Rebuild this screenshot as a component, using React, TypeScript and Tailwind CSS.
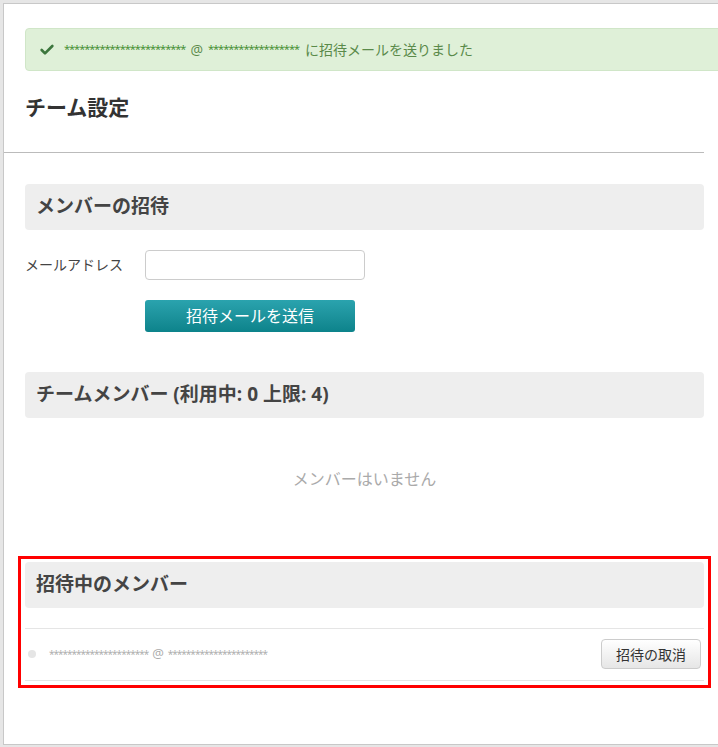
import { Check } from "lucide-react";

const font = { fontFamily: '"Open Sans", "Noto Sans CJK JP", sans-serif' };

function SectionHeader({ children }: { children: React.ReactNode }) {
  return (
    <div className="h-[46px] rounded-[4px] bg-[#eeeeee] px-[11px] flex items-center text-[19px] font-bold text-[#444]">
      {children}
    </div>
  );
}

export default function App() {
  return (
    <div className="w-[718px] h-[747px] bg-[#e6e6e6] overflow-hidden" style={font}>
      <div className="ml-[3px] mt-[3px] w-[740px] h-[742px] bg-white border-l border-t border-b border-[#c8c8c8]">
        <div className="ml-[21px] mt-[24px] h-[43px] rounded-l-[4px] bg-[#dff0d8] border border-[#d0e6c8] flex items-center pl-[13px] text-[14px] text-[#5a8a4a]">
          <Check className="w-4 h-4 text-[#3c763d]" strokeWidth={4} />
          <span className="ml-[9px] text-[#3c8a2a] text-[11px] tracking-[-1px]">************************</span>
          <span className="mx-[5px]">@</span>
          <span className="text-[#3c8a2a] text-[11px] tracking-[-1px]">******************</span>
          <span className="ml-[6px]">に招待メールを送りました</span>
        </div>
        <h1 className="ml-[21px] mt-[21px] text-[21px] font-bold text-[#333]">チーム設定</h1>
        <div className="mt-[28px] w-[700px] border-t border-[#bbb]" />
        <div className="ml-[21px] w-[679px]">
          <div className="mt-[31px]">
            <SectionHeader>メンバーの招待</SectionHeader>
          </div>
          <div className="mt-[20px] flex items-center">
            <label className="w-[120px] text-[14px] text-[#444]">メールアドレス</label>
            <input className="w-[220px] h-[30px] rounded-[4px] border border-[#ccc] bg-white outline-none" />
          </div>
          <button className="ml-[120px] mt-[20px] w-[210px] h-[32px] rounded-[3px] bg-gradient-to-b from-[#2aa3ae] to-[#0c838b] text-white text-[16px]">
            招待メールを送信
          </button>
          <div className="mt-[40px]">
            <SectionHeader>チームメンバー (利用中: 0 上限: 4)</SectionHeader>
          </div>
          <div className="h-[138px] pt-[49px] text-center text-[16px] text-[#aaa]">
            メンバーはいません
          </div>
          <div className="-ml-[7px] w-[693px] border-[3px] border-[#ff0000] px-[4px] pt-[3px] pb-[4px]">
            <SectionHeader>招待中のメンバー</SectionHeader>
            <div className="mt-[20px] border-t border-b border-[#e5e5e5] h-[53px] flex items-center pl-[3px] pr-[3px]">
              <span className="w-[8px] h-[8px] rounded-full bg-[#e5e5e5]" />
              <span className="ml-[13px] text-[10px] text-[#aaa] tracking-[-1px]">**********************</span>
              <span className="mx-[4px] text-[13px] text-[#aaa]">@</span>
              <span className="text-[10px] text-[#aaa] tracking-[-1px]">**********************</span>
              <button className="ml-auto w-[100px] h-[30px] rounded-[4px] border border-[#ccc] bg-gradient-to-b from-white to-[#e6e6e6] text-[14px] text-[#333]">
                招待の取消
              </button>
            </div>
          </div>
        </div>
      </div>
    </div>
  );
}
